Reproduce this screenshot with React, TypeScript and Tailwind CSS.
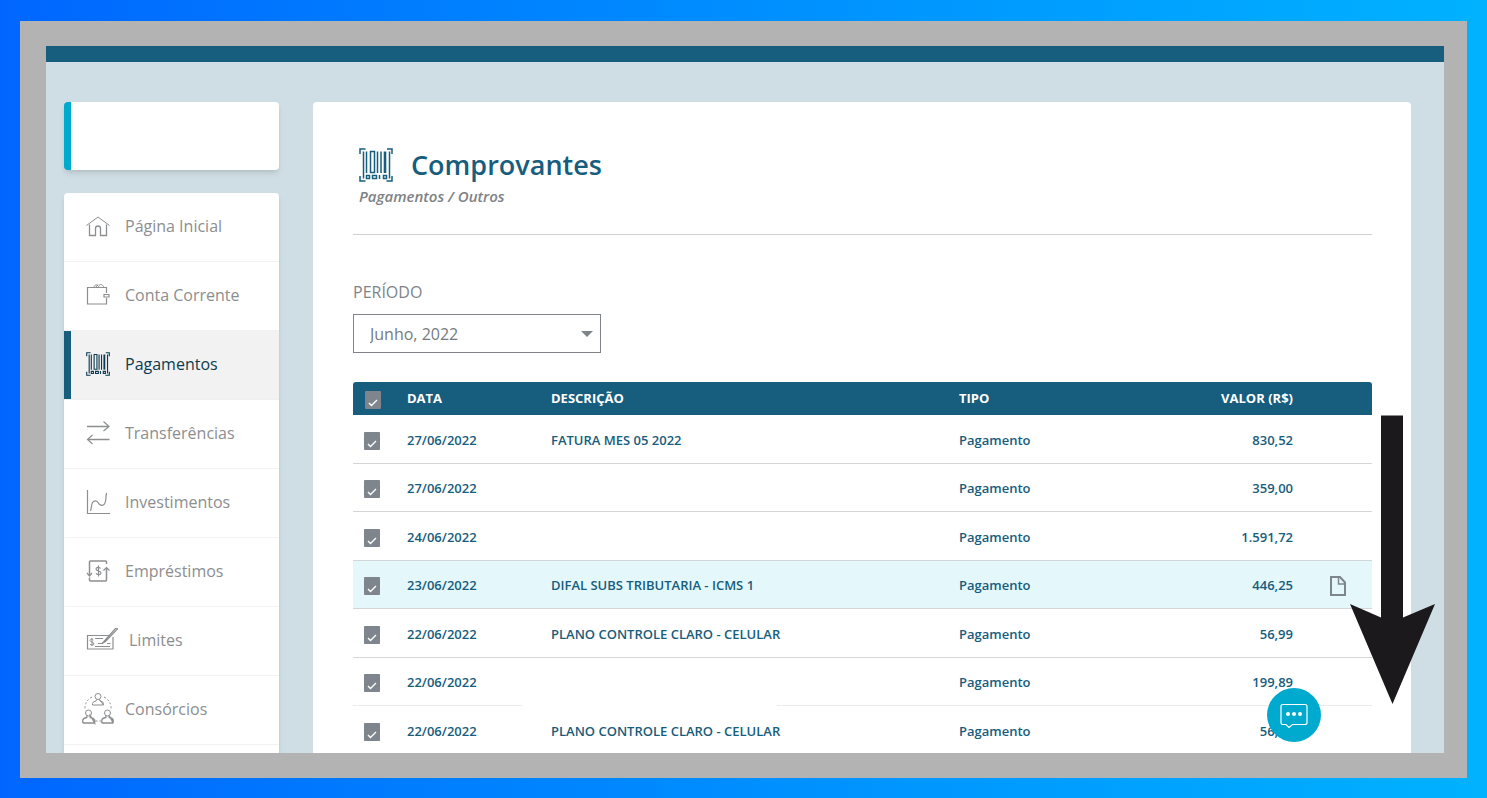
import type { ReactNode } from "react";

function HomeIcon() {
  return (
    <svg width="24" height="24" viewBox="0 0 24 24" fill="none" stroke="currentColor" aria-hidden="true">
      <path d="M.5 11.500 12 3l11.500 8.500" />
      <path strokeWidth="1.300" d="M3.500 10.500v11h6v-7a2.500 2.500 0 0 1 5 0v7h6v-11" />
    </svg>
  );
}

function WalletIcon() {
  return (
    <svg width="24" height="24" viewBox="0 0 24 24" fill="none" stroke="currentColor" aria-hidden="true">
      <path strokeWidth="1.200" d="M20.500 10v-5.500h-19v16.500h19v-6M18 11.500h5v2.500h-5z" />
      <path d="M8 4.500c.5-3.500 4-3.500 5 0M13 2.500c2-2 4-.5 5 2M10 4l2-2.500" />
    </svg>
  );
}

function BarcodeIcon({ size, weight }: { size: number; weight: number }) {
  return (
    <svg width={size} height={size} viewBox="0 0 34 34" fill="none" stroke="currentColor" strokeWidth={weight} aria-hidden="true">
      <path d="M1 6V1h5.500M28 1h5v5M33 28v5h-5.500M6.500 33H1v-5" />
      <path d="M4.500 3.500v27M7.500 3.500v21.500M11.500 3.500h4v21h-4zM18.500 3.500v21.500M22 3.500v21.500M30.500 3.500v27" />
      <path strokeWidth="2.600" d="M26 3.500v21.500" />
      <path d="M7.500 27.500h3v3h-3zM13.500 27.500h4v3h-4zM20.500 27v4M24.500 27.500h3v3h-3z" />
    </svg>
  );
}

function TransferIcon() {
  return (
    <svg width="24" height="24" viewBox="0 0 24 24" fill="none" stroke="currentColor" aria-hidden="true">
      <path strokeWidth="1.600" d="M1 5.500h22M23.500 18.500H2" />
      <path strokeWidth="1.200" d="M17.500 .5 23 5.500l-5.500 4.500M6.500 14 1.500 18.500l5 4.500" />
    </svg>
  );
}

function ChartIcon() {
  return (
    <svg width="24" height="24" viewBox="0 0 24 24" fill="none" stroke="currentColor" strokeWidth="1.200" aria-hidden="true">
      <path d="M1.500 0v23.500H24M4.500 21c1-2 .5-6 2-8.500 1.500-2 4-2.500 5.500 0 1.500 3 4 3.500 6 2 2.500-2 1.500-7 2.500-11.500" />
    </svg>
  );
}

function LoanIcon() {
  return (
    <svg width="24" height="24" viewBox="0 0 24 24" fill="none" stroke="currentColor" aria-hidden="true">
      <path strokeWidth="1.500" d="M20.500 5V3q0-1-1-1h-15Q3.500 2 3.500 3v13M3.500 18.500V21q0 1 1 1h15q1 0 1-1V9" />
      <path strokeWidth="1.200" d="M1 14l2.500 3L6 14M17.500 11.500l3-3 3 3M14.500 9.500c-1-1.800-4.500-1.500-4.500.5 0 2.500 5 1.500 5 4 0 2-4 2.200-5 .2M12.500 6.500v11" />
    </svg>
  );
}

function ChequeIcon() {
  return (
    <svg width="32" height="24" viewBox="0 0 32 24" fill="none" stroke="currentColor" aria-hidden="true">
      <path strokeWidth="1.200" d="M22.500 7.500h-21v13.500h25.500V9M17.500 14 29.500 .5q1.500-1 2 .5L19.500 13.500l-3.500 2z" />
      <path d="M9 10.500h8M12 15.500h5M21 15.500h3.500M9 18.500h15M7.500 12c-1-1.500-3.500-1-3.500.5 0 1.500 4 1.500 4 3.500 0 1.500-3 1.500-4 .3M6 10v8" />
    </svg>
  );
}

function GroupIcon() {
  return (
    <svg width="32" height="32" viewBox="0 0 32 32" fill="none" stroke="currentColor" className="-ml-1" aria-hidden="true">
      <circle cx="16" cy="3.500" r="3" />
      <path d="M10.500 12v-1.500q0-2 3.500-2.500L14.500 6.500M17.500 6.500l.5 1.500q3.500.5 3.500 2.500v1.500zM10.500 12h11" />
      <circle cx="6.500" cy="20" r="3" />
      <path strokeWidth="1.300" d="M.8 30v-3q.5-2 4-2.500V22.500M8.200 22.500v2q3.500.5 4.500 2.500v3z" />
      <circle cx="25.500" cy="20" r="3" />
      <path strokeWidth="1.300" d="M19.800 30v-3q.5-2 4-2.500V22.500M27.200 22.500v2q3.500.5 4 2.500v3z" />
      <path strokeWidth="1.500" d="M.8 30h12M19.800 30h11.400" />
      <path strokeDasharray="2 2" d="M10 4Q2.500 8 3 16M22 4q7.500 4 7 12M13.500 28h5.500" />
    </svg>
  );
}

function FileIcon() {
  return (
    <svg width="16" height="20" viewBox="0 0 16 20" fill="none" stroke="currentColor" strokeWidth="2" aria-hidden="true">
      <path d="M1 1h9l5 5.500V19H1z" />
      <path strokeWidth="1.500" d="M8.500 1v7H15" />
    </svg>
  );
}

const menu: { label: string; icon: ReactNode; active?: boolean }[] = [
  { label: "Página Inicial", icon: <HomeIcon /> },
  { label: "Conta Corrente", icon: <WalletIcon /> },
  { label: "Pagamentos", icon: <BarcodeIcon size={24} weight={1.6} />, active: true },
  { label: "Transferências", icon: <TransferIcon /> },
  { label: "Investimentos", icon: <ChartIcon /> },
  { label: "Empréstimos", icon: <LoanIcon /> },
  { label: "Limites", icon: <ChequeIcon /> },
  { label: "Consórcios", icon: <GroupIcon /> },
];

type Row = { date: string; text: string; value: string; tone?: "highlight" | "faded" };

const rows: Row[] = [
  { date: "27/06/2022", text: "FATURA MES 05 2022", value: "830,52" },
  { date: "27/06/2022", text: "", value: "359,00" },
  { date: "24/06/2022", text: "", value: "1.591,72" },
  { date: "23/06/2022", text: "DIFAL SUBS TRIBUTARIA - ICMS 1", value: "446,25", tone: "highlight" },
  { date: "22/06/2022", text: "PLANO CONTROLE CLARO - CELULAR", value: "56,99" },
  { date: "22/06/2022", text: "", value: "199,89", tone: "faded" },
  { date: "22/06/2022", text: "PLANO CONTROLE CLARO - CELULAR", value: "56,99" },
];

function Checkbox({ label }: { label: string }) {
  return (
    <label className="relative block h-[18px] w-4">
      <input type="checkbox" defaultChecked aria-label={label} className="peer block h-[18px] w-4 appearance-none rounded-[1px] bg-[#7e858c]" />
      <svg viewBox="0 0 16 18" fill="none" stroke="white" strokeWidth="1.400" className="pointer-events-none absolute inset-0 opacity-0 peer-checked:opacity-100" aria-hidden="true">
        <path d="m4 12 2.500 2.500L12 9" />
      </svg>
    </label>
  );
}

function Sidebar() {
  return (
    <aside className="flex w-[215px] shrink-0 flex-col gap-[23px]">
      <div className="h-[68px] shrink-0 rounded-[4px] border-l-[7px] border-[#00a9ce] bg-white shadow-md" />
      <nav className="flex-1 rounded-t-[4px] bg-white shadow-md">
        <ul>
          {menu.map((m) => (
            <li key={m.label} className={m.active ? "border-b border-[#eef1f2] bg-[#f2f2f2]" : "border-b border-[#f0f2f3]"}>
              <a
                href="#"
                className={
                  m.active
                    ? "flex h-[68px] items-center border-l-[7px] border-[#175d7d] pb-0.5 pl-[15px] text-[16px] text-[#0c3b4f]"
                    : "flex h-[68px] items-center pb-0.5 pl-[22px] text-[16px] text-[#8c8e90]"
                }
              >
                <span className="min-w-[39px] pr-[11px]">{m.icon}</span>
                {m.label}
              </a>
            </li>
          ))}
        </ul>
      </nav>
    </aside>
  );
}

function PaymentsTable() {
  return (
    <table className="mt-[29px] w-full table-fixed border-separate border-spacing-0 text-left text-[13px] font-semibold text-[#175d7d]">
      <colgroup>
        <col className="w-[54px]" />
        <col className="w-[115px]" />
        <col />
        <col className="w-[170px]" />
        <col className="w-[164px]" />
        <col className="w-[79px]" />
      </colgroup>
      <thead>
        <tr className="h-[33px] text-white *:bg-[#175d7d]">
          <th className="rounded-tl-[3px] pl-3 pt-[3px]"><Checkbox label="Selecionar todos" /></th>
          <th className="font-bold">DATA</th>
          <th className="pl-[29px] font-bold">DESCRIÇÃO</th>
          <th className="font-bold">TIPO</th>
          <th className="text-right font-bold">VALOR (R$)</th>
          <th className="rounded-tr-[3px]" aria-label="Comprovante" />
        </tr>
      </thead>
      <tbody>
        {rows.map((r, i) => (
          <tr
            key={i}
            className={
              r.tone === "highlight"
                ? "bg-[#e4f8fc] odd:h-[49px] even:h-[48px] *:border-b *:border-[#d3d6d8] *:pt-[3px]"
                : r.tone === "faded"
                  ? "odd:h-[49px] even:h-[48px] *:border-b *:border-[#ececec] *:pt-[3px]"
                  : "odd:h-[49px] even:h-[48px] *:border-b *:border-[#d3d6d8] *:pt-[3px]"
            }
          >
            <td className="pl-[11px]"><Checkbox label={`Selecionar ${r.date} ${r.value}`} /></td>
            <td>{r.date}</td>
            <td className="relative pl-[29px]">
              {r.text}
              {r.tone === "faded" && <span className="absolute -bottom-px left-0 h-1 w-[255px] bg-white" />}
            </td>
            <td>Pagamento</td>
            <td className="text-right">{r.value}</td>
            <td className="pl-[37px] text-[#7e858c]">
              {r.tone === "highlight" && (
                <button type="button" aria-label="Ver comprovante" className="block"><FileIcon /></button>
              )}
            </td>
          </tr>
        ))}
      </tbody>
    </table>
  );
}

export default function App() {
  return (
    <div className="flex h-screen bg-linear-to-r from-[#0066ff] to-[#00b2ff] px-5 pb-5 pt-[21px] font-['Open_Sans',sans-serif]">
      <div className="flex min-w-0 flex-1 bg-[#b3b3b3] pb-[25px] pl-[26px] pr-[23px] pt-[25px]">
        <div className="relative flex min-w-0 flex-1 flex-col overflow-hidden bg-[#cfdee4]">
          <header className="h-4 shrink-0 bg-[#175d7d]" />
          <div className="flex min-h-0 flex-1 gap-[34px] pl-[18px] pr-[33px] pt-10">
            <Sidebar />
            <main className="min-w-0 flex-1 rounded-t-[4px] bg-white pl-10 pr-[39px] pt-[46px]">
              <div className="border-b border-[#cfd1d2] pb-6 pl-[6px]">
                <div className="flex h-[34px] items-center gap-[18px] text-[#175d7d]">
                  <BarcodeIcon size={34} weight={1.5} />
                  <h1 className="text-[27px] font-semibold leading-8">Comprovantes</h1>
                </div>
                <p className="text-[15px] font-semibold italic leading-[28px] text-[#7e8284]">Pagamentos / Outros</p>
              </div>
              <label htmlFor="periodo" className="mb-[10px] mt-[45px] block text-[16px] leading-6 text-[#7e8488]">
                PERÍODO
              </label>
              <div className="relative w-[248px]">
                <select id="periodo" className="h-[39px] w-full appearance-none border border-[#808488] bg-white pl-4 text-[16px] text-[#757b80]">
                  <option>Junho, 2022</option>
                </select>
                <svg width="12" height="6" viewBox="0 0 12 6" className="pointer-events-none absolute right-2 top-[17px] fill-[#7e8589]" aria-hidden="true">
                  <path d="M0 0h12L6 6z" />
                </svg>
              </div>
              <PaymentsTable />
            </main>
          </div>
          <svg width="85" height="289" viewBox="0 0 85 289" className="pointer-events-none absolute right-[9px] top-[369px] fill-[#1b191b]" aria-hidden="true">
            <path d="M31 0.500h22v202L85 189 42.500 289 0 189l31 13.500z" />
          </svg>
          <button type="button" aria-label="Abrir chat" className="absolute bottom-[11px] right-[123px] grid size-[54px] place-items-center rounded-full bg-[#00a9ce] text-white">
            <svg width="28" height="26" viewBox="0 0 28 26" fill="none" stroke="currentColor" strokeWidth="1.200" aria-hidden="true">
              <path d="M3 2.500h22q2 0 2 2v16q0 2-2 2H12.500L9 25.500l-3-3H3q-2 0-2-2v-16q0-2 2-2z" />
              <g fill="currentColor" stroke="none">
                <circle cx="8" cy="12" r="2" />
                <circle cx="14" cy="12" r="2" />
                <circle cx="20" cy="12" r="2" />
              </g>
            </svg>
          </button>
        </div>
      </div>
    </div>
  );
}
